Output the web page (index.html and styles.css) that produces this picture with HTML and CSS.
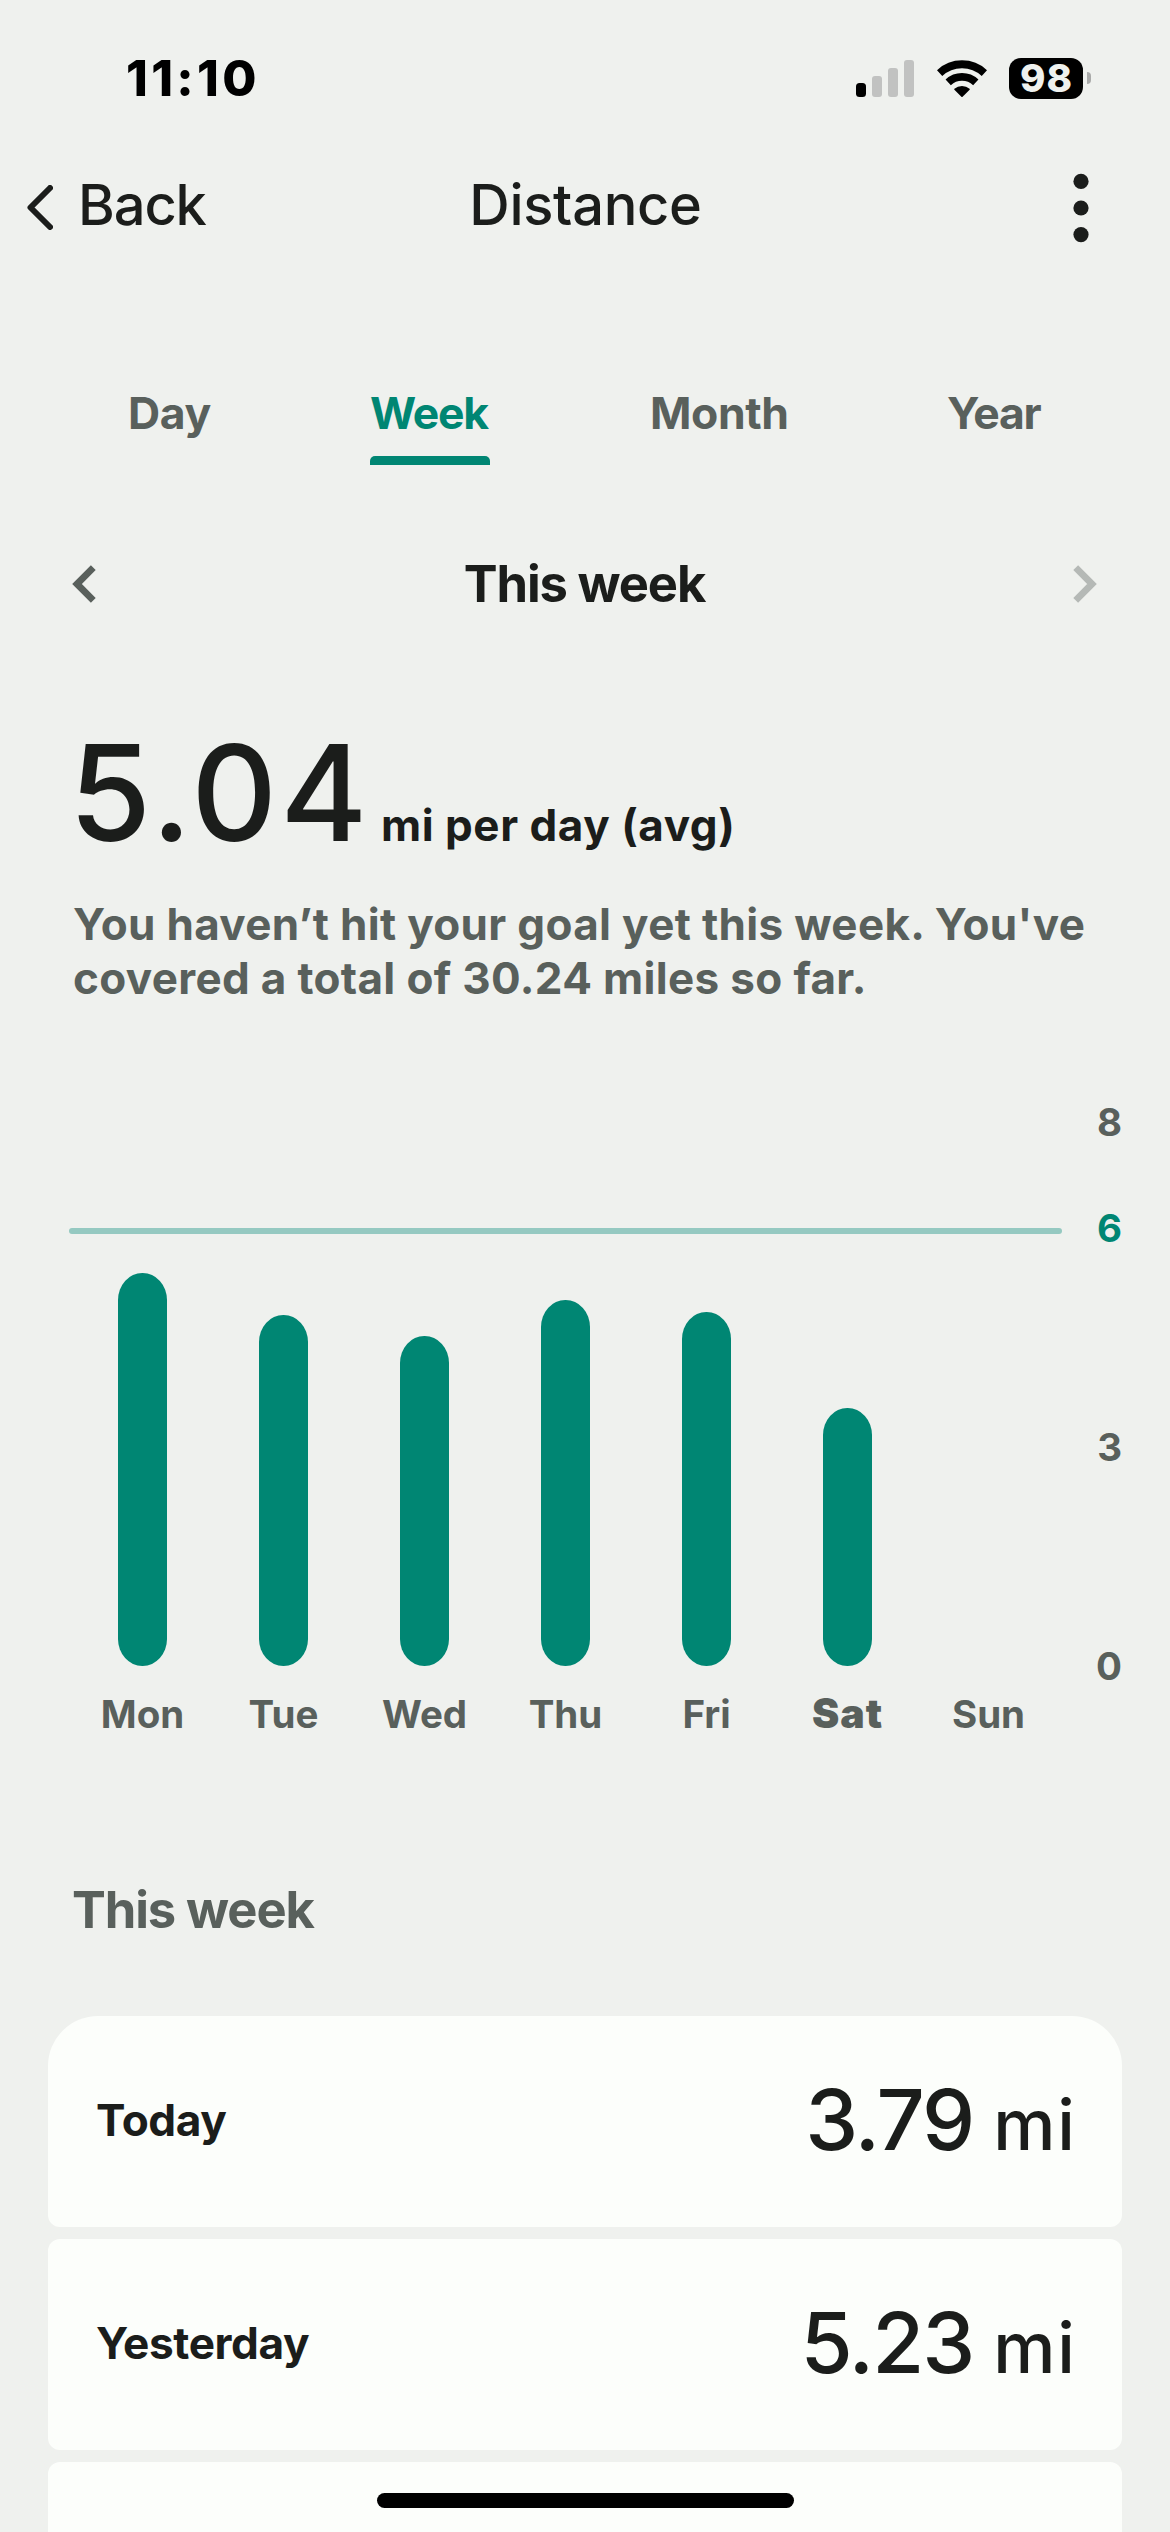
FILE: index.html
```html
<!DOCTYPE html>
<html lang="en">
<head>
<meta charset="utf-8">
<title>Distance</title>
<link rel="stylesheet" href="styles.css">
</head>
<body>
<div class="screen">
  <div class="status">
    <span class="time">11:10</span>
    <div class="status-icons">
      <svg class="signal" width="58" height="37" viewBox="0 0 58 37">
        <rect x="0" y="23" width="10" height="14" rx="3.5" fill="#000"/>
        <rect x="16" y="16" width="10" height="21" rx="3" fill="#c1c2c1"/>
        <rect x="32" y="8" width="10" height="29" rx="3" fill="#c1c2c1"/>
        <rect x="48" y="0" width="10" height="37" rx="3" fill="#c1c2c1"/>
      </svg>
      <svg class="wifi" width="50" height="37" viewBox="0 0 50 37">
        <g fill="none" stroke="#000" stroke-width="7.8">
          <path d="M2.6 13.1A32.8 32.8 0 0 1 47.4 13.1"/>
          <path d="M11.2 22.3A20.3 20.3 0 0 1 38.8 22.3"/>
        </g>
        <path d="M17.4 28.8A12 12 0 0 1 32.6 28.8Q33 29.5 32.4 30.1L25.6 36.7Q25 37.1 24.4 36.7L17.6 30.1Q17 29.5 17.4 28.8Z"/>
      </svg>
      <div class="battery">98</div>
      <div class="battery-cap"></div>
    </div>
  </div>

  <header class="header">
    <a class="back">
      <svg width="26" height="45" viewBox="0 0 26 45"><path d="M23 3 3.5 22.5 23 42" fill="none" stroke="#1b1d1b" stroke-width="6" stroke-linecap="round" stroke-linejoin="round"/></svg>
      <span class="back-label">Back</span>
    </a>
    <h1 class="title">Distance</h1>
    <svg class="more" width="16" height="70" viewBox="0 0 16 70" fill="#1b1d1b"><circle cx="8" cy="8.4" r="7.6"/><circle cx="8" cy="35" r="7.6"/><circle cx="8" cy="61.6" r="7.6"/></svg>
  </header>

  <nav class="tabs">
    <span class="tab">Day</span>
    <span class="tab tab-active">Week</span>
    <span class="tab tab-month">Month</span>
    <span class="tab tab-year">Year</span>
  </nav>

  <div class="period">
    <svg width="24" height="38" viewBox="0 0 24 38"><path d="M21.3 2.7 5 19 21.3 35.3" fill="none" stroke="#59605c" stroke-width="6.8"/></svg>
    <h2 class="period-title">This week</h2>
    <svg width="24" height="38" viewBox="0 0 24 38"><path d="M2.7 2.7 19 19 2.7 35.3" fill="none" stroke="#b5b9b6" stroke-width="6.8"/></svg>
  </div>

  <section class="summary">
    <div class="average"><span class="average-value">5.04</span><span class="average-unit">mi per day (avg)</span></div>
    <p class="message">You haven’t hit your goal yet this week. You've<br>covered a total of 30.24 miles so far.</p>
  </section>

  <section class="chart">
    <div class="plot">
      <div class="goal"></div>
      <div class="bars">
        <div class="bar" style="height:393px"></div>
        <div class="bar" style="height:351px"></div>
        <div class="bar" style="height:330px"></div>
        <div class="bar" style="height:366px"></div>
        <div class="bar" style="height:354px"></div>
        <div class="bar" style="height:258px"></div>
        <div class="bar" style="height:0px"></div>
      </div>
      <div class="days">
        <span>Mon</span><span>Tue</span><span>Wed</span><span>Thu</span><span>Fri</span><span class="today">Sat</span><span>Sun</span>
      </div>
    </div>
    <div class="axis"><span>8</span><span class="axis-goal">6</span><span>3</span><span>0</span></div>
  </section>

  <h3 class="list-title">This week</h3>
  <div class="list">
    <div class="row"><span class="row-day">Today</span><span class="row-value">3.79<span class="row-unit">mi</span></span></div>
    <div class="row"><span class="row-day">Yesterday</span><span class="row-value">5.23<span class="row-unit">mi</span></span></div>
    <div class="row"></div>
  </div>
  <div class="home-indicator"></div>
</div>
</body>
</html>
```
FILE: styles.css
```css
* { box-sizing: border-box; }
body { margin: 0; background: #eff1ee; }
h1, h2, h3, p { margin: 0; font-weight: inherit; }
svg { display: block; flex: none; }

.screen {
  position: relative;
  width: 1170px;
  height: 2532px;
  overflow: hidden;
  background: #eff1ee;
  color: #1b1d1b;
  font-family: Inter, "Liberation Sans", sans-serif;
}

.status {
  display: flex;
  justify-content: space-between;
  align-items: center;
  height: 156px;
  padding: 0 79px 0 126px;
}
.time { color: #000; font-size: 49.5px; font-weight: 800; line-height: 60px; letter-spacing: 3.3px; }
.status-icons { display: flex; align-items: center; }
.wifi { margin-left: 22.5px; }
.battery {
  width: 74px;
  height: 41px;
  margin-left: 22.5px;
  padding-left: 1px;
  border-radius: 12px;
  background: #000;
  color: #eff1ee;
  font-size: 38.5px;
  font-weight: 800;
  line-height: 41px;
  letter-spacing: 1px;
  text-align: center;
}
.battery-cap { width: 4px; height: 12px; margin-left: 4px; border-radius: 0 4px 4px 0; background: #a9aaa9; }

.header {
  display: grid;
  grid-template-columns: 1fr auto 1fr;
  align-items: center;
  height: 103px;
  padding: 0 81px 0 27px;
  font-size: 56px;
  font-weight: 500;
  line-height: 68px;
}
.back { display: flex; align-items: center; gap: 25px; letter-spacing: -1.1px; }
.back-label { padding-bottom: 6px; }
.title { margin-left: 55px; padding-bottom: 6px; font-size: 56px; font-weight: 500; letter-spacing: -.3px; }
.more { justify-self: end; }

.tabs {
  display: flex;
  margin-top: 123px;
  padding-left: 128px;
  color: #59605c;
  font-size: 44.5px;
  font-weight: 700;
  line-height: 62px;
  letter-spacing: -.4px;
  white-space: nowrap;
}
.tab { flex: none; width: 242px; height: 83px; }
.tab-active { width: 120px; margin-right: 160px; color: #008673; letter-spacing: -1.2px; }
.tab-active::after { content: ""; display: block; height: 9px; margin-top: 12px; border-radius: 5px 5px 0 0; background: #008673; }
.tab-month { width: 297px; }
.tab-year { width: 100px; letter-spacing: -1.3px; }

.period {
  display: flex;
  justify-content: space-between;
  align-items: center;
  height: 80px;
  margin-top: 79px;
  padding: 0 73px 0 72px;
}
.period-title { font-size: 50.7px; font-weight: 700; line-height: 62px; letter-spacing: -1.15px; }

.summary { padding: 102px 0 0 73px; }
.average { display: flex; align-items: baseline; height: 133px; line-height: 133px; }
.average-value { margin-left: -4px; font-size: 133px; font-weight: 500; letter-spacing: 3.3px; }
.average-unit { margin-left: 10px; font-size: 44px; font-weight: 700; line-height: 50px; letter-spacing: .55px; }
.message {
  margin-top: 38px;
  color: #59605c;
  font-size: 44px;
  font-weight: 700;
  line-height: 54px;
  letter-spacing: .34px;
  white-space: nowrap;
}

.chart { display: flex; justify-content: space-between; margin-top: 97px; padding: 0 48px 0 69px; font-size: 38.5px; font-weight: 700; color: #59605c; }
.plot { position: relative; width: 993px; }
.goal { position: absolute; left: 0; right: 0; top: 126px; height: 6px; border-radius: 3px; background: #95c9c1; }
.bars, .days { display: grid; grid-template-columns: repeat(7, 141px); margin-left: 3px; justify-items: center; }
.bars { height: 564px; align-items: end; }
.bar { width: 48.5px; border-radius: 24.25px / 27px; background: #008673; }
.days { height: 96px; line-height: 96px; }
.today { margin-top: -1px; font-size: 41px; font-weight: 900; letter-spacing: 1px; }
.axis { display: grid; grid-template-rows: 106px 219px 219px 40px; line-height: 40px; text-align: right; }
.axis-goal { color: #008673; }

.list-title { margin-top: 117px; padding-left: 72px; color: #59605c; font-size: 50.7px; font-weight: 700; line-height: 62px; letter-spacing: -1.1px; }
.list { display: flex; flex-direction: column; gap: 12px; margin-top: 75px; padding: 0 48px; }
.row {
  display: flex;
  flex: none;
  justify-content: space-between;
  align-items: center;
  height: 211px;
  padding: 0 47px 3px 48px;
  border-radius: 12px;
  background: #fcfefb;
}
.row:first-child { border-radius: 50px 50px 12px 12px; }
.row-day { font-size: 44.2px; font-weight: 700; line-height: 60px; letter-spacing: -.4px; }
.row-value { padding-top: 3px; font-size: 84.5px; font-weight: 500; line-height: 103px; letter-spacing: -2px; }
.row-unit { margin-left: 20px; font-size: 70px; letter-spacing: 2px; margin-right: -2px; }

.home-indicator { position: absolute; left: 377px; top: 2493px; width: 417px; height: 15px; border-radius: 8px; background: #000; }
```
